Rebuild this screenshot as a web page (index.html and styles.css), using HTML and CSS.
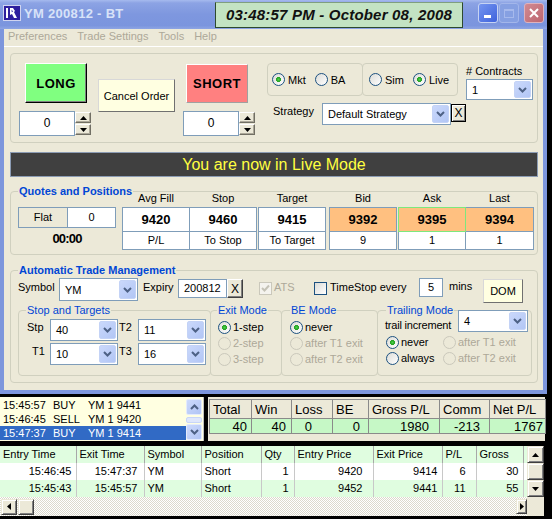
FILE: index.html
```html
<!DOCTYPE html>
<html lang="en">
<head>
    <meta charset="UTF-8">
    <title>YM 200812 - BT</title>
    <link rel="stylesheet" href="styles.css">
</head>
<body>
<div class="screen">
    <div class="window">
        <div class="titlebar">
            <svg class="app-icon" width="18" height="16" viewBox="0 0 18 16">
                <rect x="0.5" y="0.5" width="17" height="15" fill="#2d1f9e" stroke="#d0d4f0"/>
                <path d="M3 3h2v10H3z" fill="#fff"/>
                <path d="M7 3h3l2 3-1 1 3 6h-3l-2-4-2 1z" fill="#fff"/>
                <path d="M8.5 4.5l1.5 2-1.2.8z" fill="#2d1f9e"/>
            </svg>
            <span class="title">YM 200812 - BT</span>
            <div class="clock">03:48:57 PM - October 08, 2008</div>
            <div class="caption-buttons">
                <span class="cap-btn cap-min"><span class="min-bar"></span></span>
                <span class="cap-btn cap-max"><span class="max-box"></span></span>
                <span class="cap-btn cap-close">
                    <svg width="12" height="12" viewBox="0 0 12 12"><path d="M2 2l8 8M10 2l-8 8" stroke="#fff" stroke-width="2"/></svg>
                </span>
            </div>
        </div>

        <div class="frame">
            <div class="menubar">
                <span>Preferences</span>
                <span>Trade Settings</span>
                <span>Tools</span>
                <span>Help</span>
            </div>

            <div class="client">
                <!-- order entry -->
                <div class="order-panel">
                    <div class="side-col">
                        <button class="btn-long">LONG</button>
                        <div class="spinner">
                            <span class="spin-value">0</span>
                            <span class="spin-btns">
                                <span class="spin-btn"><svg width="7" height="4" viewBox="0 0 7 4"><path d="M0 4h7L3.5 0z"/></svg></span>
                                <span class="spin-btn"><svg width="7" height="4" viewBox="0 0 7 4"><path d="M0 0h7L3.5 4z"/></svg></span>
                            </span>
                        </div>
                    </div>
                    <button class="btn-cancel">Cancel Order</button>
                    <div class="side-col short-col">
                        <button class="btn-short">SHORT</button>
                        <div class="spinner">
                            <span class="spin-value">0</span>
                            <span class="spin-btns">
                                <span class="spin-btn"><svg width="7" height="4" viewBox="0 0 7 4"><path d="M0 4h7L3.5 0z"/></svg></span>
                                <span class="spin-btn"><svg width="7" height="4" viewBox="0 0 7 4"><path d="M0 0h7L3.5 4z"/></svg></span>
                            </span>
                        </div>
                    </div>
                    <div class="order-opts">
                        <div class="opts-row">
                            <div class="radio-box box-type">
                                <span class="radio on"><i></i>Mkt</span>
                                <span class="radio"><i></i>BA</span>
                            </div>
                            <div class="radio-box box-mode">
                                <span class="radio"><i></i>Sim</span>
                                <span class="radio on"><i></i>Live</span>
                            </div>
                            <div class="contracts">
                                <span class="lbl"># Contracts</span>
                                <div class="combo combo-contracts">
                                    <span class="combo-text">1</span>
                                    <span class="combo-btn"><svg width="9" height="6" viewBox="0 0 9 6"><path d="M1 1l3.5 3.5L8 1" fill="none" stroke="#4d6185" stroke-width="2"/></svg></span>
                                </div>
                            </div>
                        </div>
                        <div class="strategy-row">
                            <span class="lbl strategy-lbl">Strategy</span>
                            <div class="combo combo-strategy">
                                <span class="combo-text">Default Strategy</span>
                                <span class="combo-btn"><svg width="9" height="6" viewBox="0 0 9 6"><path d="M1 1l3.5 3.5L8 1" fill="none" stroke="#4d6185" stroke-width="2"/></svg></span>
                            </div>
                            <button class="btn-x btn-x-strategy">X</button>
                        </div>
                    </div>
                </div>

                <div class="banner">You are now in Live Mode</div>

                <!-- quotes -->
                <fieldset class="group quotes">
                    <legend>Quotes and Positions</legend>
                    <div class="quotes-row">
                        <div class="pos-col">
                            <div class="pos-box">
                                <span class="pos-flat">Flat</span>
                                <span class="pos-qty">0</span>
                            </div>
                            <div class="pos-time">00:00</div>
                        </div>
                        <div class="qgroup q-avg">
                            <div class="qhead"><span>Avg Fill</span><span>Stop</span></div>
                            <div class="qbox">
                                <span class="qval">9420</span><span class="qval">9460</span>
                                <span class="qsub">P/L</span><span class="qsub">To Stop</span>
                            </div>
                        </div>
                        <div class="qgroup q-target">
                            <div class="qhead"><span>Target</span></div>
                            <div class="qbox">
                                <span class="qval">9415</span>
                                <span class="qsub">To Target</span>
                            </div>
                        </div>
                        <div class="qgroup q-bid">
                            <div class="qhead"><span>Bid</span></div>
                            <div class="qbox">
                                <span class="qval hot">9392</span>
                                <span class="qsub">9</span>
                            </div>
                        </div>
                        <div class="qgroup q-asklast">
                            <div class="qhead"><span>Ask</span><span>Last</span></div>
                            <div class="qbox">
                                <span class="qval hot ask-hot">9395</span><span class="qval hot">9394</span>
                                <span class="qsub">1</span><span class="qsub">1</span>
                            </div>
                        </div>
                    </div>
                </fieldset>

                <!-- automatic trade management -->
                <fieldset class="group atm">
                    <legend>Automatic Trade Management</legend>
                    <div class="atm-top">
                        <span class="lbl lbl-symbol">Symbol</span>
                        <div class="combo combo-symbol">
                            <span class="combo-text">YM</span>
                            <span class="combo-btn"><svg width="9" height="6" viewBox="0 0 9 6"><path d="M1 1l3.5 3.5L8 1" fill="none" stroke="#4d6185" stroke-width="2"/></svg></span>
                        </div>
                        <span class="lbl lbl-expiry">Expiry</span>
                        <span class="textbox tb-expiry">200812</span>
                        <button class="btn-x btn-x-expiry">X</button>
                        <span class="check check-ats">
                            <svg width="9" height="9" viewBox="0 0 9 9"><path d="M1 4l2.5 2.5L8 1.5" fill="none" stroke="#c4c2b6" stroke-width="2"/></svg>
                        </span>
                        <span class="lbl lbl-ats">ATS</span>
                        <span class="check check-time"></span>
                        <span class="lbl lbl-time">TimeStop every</span>
                        <span class="textbox tb-mins">5</span>
                        <span class="lbl lbl-mins">mins</span>
                        <button class="btn-dom">DOM</button>
                    </div>
                    <div class="atm-bottom">
                        <fieldset class="group sub sub-targets">
                            <legend>Stop and Targets</legend>
                            <div class="targets-grid">
                                <span class="lbl t-lbl">Stp</span>
                                <div class="combo">
                                    <span class="combo-text">40</span>
                                    <span class="combo-btn"><svg width="9" height="6" viewBox="0 0 9 6"><path d="M1 1l3.5 3.5L8 1" fill="none" stroke="#4d6185" stroke-width="2"/></svg></span>
                                </div>
                                <span class="lbl t-lbl2">T2</span>
                                <div class="combo">
                                    <span class="combo-text">11</span>
                                    <span class="combo-btn"><svg width="9" height="6" viewBox="0 0 9 6"><path d="M1 1l3.5 3.5L8 1" fill="none" stroke="#4d6185" stroke-width="2"/></svg></span>
                                </div>
                                <span class="lbl t-lbl t1">T1</span>
                                <div class="combo">
                                    <span class="combo-text">10</span>
                                    <span class="combo-btn"><svg width="9" height="6" viewBox="0 0 9 6"><path d="M1 1l3.5 3.5L8 1" fill="none" stroke="#4d6185" stroke-width="2"/></svg></span>
                                </div>
                                <span class="lbl t-lbl2">T3</span>
                                <div class="combo">
                                    <span class="combo-text">16</span>
                                    <span class="combo-btn"><svg width="9" height="6" viewBox="0 0 9 6"><path d="M1 1l3.5 3.5L8 1" fill="none" stroke="#4d6185" stroke-width="2"/></svg></span>
                                </div>
                            </div>
                        </fieldset>

                        <fieldset class="group sub sub-exit">
                            <legend>Exit Mode</legend>
                            <div class="radio-list">
                                <span class="radio on"><i></i>1-step</span>
                                <span class="radio off"><i></i>2-step</span>
                                <span class="radio off"><i></i>3-step</span>
                            </div>
                        </fieldset>

                        <fieldset class="group sub sub-be">
                            <legend>BE Mode</legend>
                            <div class="radio-list">
                                <span class="radio on"><i></i>never</span>
                                <span class="radio off"><i></i>after T1 exit</span>
                                <span class="radio off"><i></i>after T2 exit</span>
                            </div>
                        </fieldset>

                        <fieldset class="group sub sub-trail">
                            <legend>Trailing Mode</legend>
                            <div class="trail-row">
                                <span class="lbl trail-lbl">trail increment</span>
                                <div class="combo combo-trail">
                                    <span class="combo-text">4</span>
                                    <span class="combo-btn"><svg width="9" height="6" viewBox="0 0 9 6"><path d="M1 1l3.5 3.5L8 1" fill="none" stroke="#4d6185" stroke-width="2"/></svg></span>
                                </div>
                            </div>
                            <div class="trail-radios">
                                <span class="radio on"><i></i>never</span>
                                <span class="radio off"><i></i>after T1 exit</span>
                                <span class="radio"><i></i>always</span>
                                <span class="radio off"><i></i>after T2 exit</span>
                            </div>
                        </fieldset>
                    </div>
                </fieldset>
            </div>
        </div>
    </div>

    <div class="lower">
        <div class="lower-top">
            <div class="fills">
                <div class="fills-rows">
                    <div class="fill-row"><span class="f-time">15:45:57</span><span class="f-side">BUY</span><span>YM 1 9441</span></div>
                    <div class="fill-row"><span class="f-time">15:46:45</span><span class="f-side">SELL</span><span>YM 1 9420</span></div>
                    <div class="fill-row selected"><span class="f-time">15:47:37</span><span class="f-side">BUY</span><span>YM 1 9414</span></div>
                </div>
                <div class="xp-vscroll">
                    <span class="xp-sbtn"><svg width="9" height="6" viewBox="0 0 9 6"><path d="M1 5l3.5-3.5L8 5" fill="none" stroke="#4d6185" stroke-width="2"/></svg></span>
                    <span class="xp-thumb"></span>
                    <span class="xp-sbtn"><svg width="9" height="6" viewBox="0 0 9 6"><path d="M1 1l3.5 3.5L8 1" fill="none" stroke="#4d6185" stroke-width="2"/></svg></span>
                </div>
            </div>
            <div class="stats-panel">
                <table class="stats">
                    <colgroup>
                        <col class="s-total"><col class="s-win"><col class="s-loss"><col class="s-be">
                        <col class="s-gross"><col class="s-comm"><col class="s-net">
                    </colgroup>
                    <tr>
                        <th>Total</th><th>Win</th><th>Loss</th><th>BE</th><th>Gross P/L</th><th>Comm</th><th>Net P/L</th>
                    </tr>
                    <tr>
                        <td class="p4">40</td><td class="p5">40</td><td class="p20">0</td><td class="p8">0</td>
                        <td class="p10">1980</td><td class="p9">-213</td><td class="p2">1767</td>
                    </tr>
                </table>
            </div>
        </div>

        <div class="trades">
            <div class="trades-main">
                <table class="trade-grid">
                    <colgroup>
                        <col class="w-entry"><col class="w-exit"><col class="w-sym"><col class="w-pos"><col class="w-qty">
                        <col class="w-eprice"><col class="w-xprice"><col class="w-pl"><col class="w-gross"><col class="w-more">
                    </colgroup>
                    <thead>
                        <tr>
                            <th>Entry Time</th><th>Exit Time</th><th>Symbol</th><th>Position</th><th>Qty</th>
                            <th>Entry Price</th><th>Exit Price</th><th>P/L</th><th>Gross</th><th></th>
                        </tr>
                    </thead>
                    <tbody>
                        <tr>
                            <td class="num">15:46:45</td><td class="num n6">15:47:37</td><td>YM</td><td>Short</td><td class="num n5">1</td>
                            <td class="num n10">9420</td><td class="num">9414</td><td class="num n10">6</td><td class="num">30</td><td></td>
                        </tr>
                        <tr class="alt">
                            <td class="num">15:45:43</td><td class="num n6">15:45:57</td><td>YM</td><td>Short</td><td class="num n5">1</td>
                            <td class="num n10">9452</td><td class="num">9441</td><td class="num n10">11</td><td class="num">55</td><td></td>
                        </tr>
                    </tbody>
                </table>
                <div class="hscroll">
                    <span class="cl-btn"><svg width="4" height="7" viewBox="0 0 4 7"><path d="M4 0v7L0 3.5z"/></svg></span>
                    <span class="cl-btn cl-thumb"></span>
                    <span class="hscroll-track"></span>
                    <span class="cl-btn cl-right"><svg width="4" height="7" viewBox="0 0 4 7"><path d="M0 0v7l4-3.5z"/></svg></span>
                </div>
            </div>
            <div class="vscroll">
                <span class="cl-btn"><svg width="7" height="4" viewBox="0 0 7 4"><path d="M0 4h7L3.5 0z"/></svg></span>
                <span class="cl-btn"></span>
                <span class="cl-btn"><svg width="7" height="4" viewBox="0 0 7 4"><path d="M0 0h7L3.5 4z"/></svg></span>
                <span class="vscroll-corner"></span>
            </div>
        </div>
    </div>
</div>
</body>
</html>
```

FILE: styles.css
```css
* {
    box-sizing: border-box;
}

body {
    margin: 0;
    background: #000;
    font-family: "Liberation Sans", Arial, sans-serif;
    font-size: 11px;
    color: #000;
}

button {
    font-family: inherit;
    font-size: 11px;
    padding: 0;
    color: #000;
}

.screen {
    width: 552px;
    height: 519px;
    overflow: hidden;
}

/* ---------- window chrome ---------- */

.window {
    width: 547px;
}

.titlebar {
    display: flex;
    align-items: flex-start;
    height: 29px;
    padding: 0 3px;
    background: linear-gradient(#a6baee 0, #8ca3e4 3px, #7e97df 50%, #7b95de 88%, #8ea5e3 100%);
}

.app-icon {
    flex: none;
    margin-top: 5px;
}

.title {
    flex: 1;
    margin: 6px 0 0 3px;
    font-size: 13px;
    font-weight: bold;
    line-height: 15px;
    color: #d8e2f8;
    letter-spacing: 0.3px;
}

.clock {
    width: 248px;
    height: 26px;
    margin: 2px 15px 0 0;
    background: #c3e3c3;
    border: 1px solid #2e4a2e;
    border-top-color: #7f9f7f;
    font-size: 15px;
    font-weight: bold;
    font-style: italic;
    line-height: 24px;
    text-align: center;
    letter-spacing: 0.2px;
    color: #111;
}

.caption-buttons {
    display: flex;
    margin-top: 3px;
}

.cap-btn {
    display: flex;
    align-items: center;
    justify-content: center;
    width: 20px;
    height: 20px;
    border-radius: 3px;
    border: 1px solid #c6d3f3;
}

.cap-min {
    align-items: flex-end;
    justify-content: flex-start;
    padding: 0 0 4px 5px;
    background: linear-gradient(135deg, #7495f0, #3e62dc);
}

.min-bar {
    width: 7px;
    height: 3px;
    background: #fff;
}

.cap-max {
    margin-left: 1px;
    background: #86a0e2;
    border-color: #a3b6ea;
}

.max-box {
    width: 10px;
    height: 9px;
    border: 1px solid #a6b9ec;
    border-top-width: 2px;
}

.cap-close {
    margin-left: 5px;
    background: linear-gradient(135deg, #d18a92, #bd6670);
    border-color: #deb2bd;
}

.frame {
    border: 4px solid #7d96dc;
    border-top: 0;
}

.menubar {
    display: flex;
    gap: 10px;
    height: 18px;
    padding-left: 4px;
    background: #ece9d8;
    border-bottom: 1px solid #fff;
    color: #aca899;
    line-height: 15px;
}

.client {
    height: 343px;
    padding-top: 6px;
    background: #ece9d8;
    overflow: hidden;
}

/* ---------- common controls ---------- */

.lbl {
    line-height: 13px;
    white-space: nowrap;
}

.group {
    margin: 0;
    padding: 0;
    min-width: 0;
    border: 1px solid #d0d0bf;
    border-radius: 4px;
}

.group > legend {
    padding: 0 1px;
    color: #0046d5;
    line-height: 13px;
}

.combo {
    display: flex;
    align-items: center;
    height: 22px;
    background: #fff;
    border: 1px solid #7f9db9;
}

.combo-text {
    flex: 1;
    padding-left: 5px;
    white-space: nowrap;
}

.combo-btn {
    display: flex;
    align-items: center;
    justify-content: center;
    width: 17px;
    height: calc(100% - 2px);
    margin-right: 1px;
    border: 1px solid #c4d3f6;
    border-radius: 2px;
    background: linear-gradient(135deg, #cad8fb, #b2c6f5);
}

.textbox {
    display: block;
    height: 19px;
    background: #fff;
    border: 1px solid #7f9db9;
    line-height: 17px;
}

.radio {
    display: flex;
    align-items: center;
    height: 16px;
    white-space: nowrap;
}

.radio i {
    flex: none;
    width: 13px;
    height: 13px;
    margin-right: 2px;
    border: 1px solid #1c5180;
    border-radius: 50%;
    background: linear-gradient(135deg, #dcdcd7, #fff);
}

.radio.on i {
    background: radial-gradient(circle, #4fd14b 0, #21a121 2.2px, transparent 2.8px),
                linear-gradient(135deg, #dcdcd7, #fff);
}

.radio.off {
    color: #aca899;
}

.radio.off i {
    border-color: #cac8bb;
    background: none;
}

.check {
    display: flex;
    align-items: center;
    justify-content: center;
    width: 13px;
    height: 13px;
    border: 1px solid #1c5180;
    background: linear-gradient(135deg, #dcdcd7, #fff);
}

.check-ats {
    border-color: #cac8bb;
    background: #f4f3ee;
}

.btn-x {
    height: 19px;
    font-size: 12px;
    background: #ece9d8;
    border: 1px solid;
    border-color: #fff #404040 #404040 #fff;
    box-shadow: inset -1px -1px #808080;
}

/* ---------- order panel ---------- */

.order-panel {
    display: flex;
    align-items: flex-start;
    width: 528px;
    height: 90px;
    margin-left: 6px;
    padding-top: 9px;
    border: 1px solid #d0d0bf;
    border-radius: 4px;
}

.side-col {
    width: 73px;
    margin-left: 8px;
}

.short-col {
    margin-left: 8px;
}

.btn-long,
.btn-short {
    display: block;
    width: 62px;
    font-size: 13px;
    font-weight: bold;
    letter-spacing: 0.5px;
    border: 1px solid;
}

.btn-long {
    height: 40px;
    margin-left: 6px;
    background: #80ff80;
    border-color: #fff #000 #000 #fff;
    box-shadow: inset -1px -1px #808080;
}

.btn-short {
    height: 39px;
    margin: 1px 0 0 3px;
    background: #ff8080;
    border-color: #fff #a0a0a0 #a0a0a0 #fff;
}

.btn-short + .spinner {
    margin-top: 8px;
}

.spinner {
    display: flex;
    height: 25px;
    margin-top: 8px;
}

.spin-value {
    width: 56px;
    background: #fff;
    border: 1px solid #7f9db9;
    font-size: 12px;
    line-height: 23px;
    text-align: center;
}

.spin-btns {
    display: flex;
    flex-direction: column;
    gap: 1px;
    padding-top: 1px;
}

.spin-btn {
    display: flex;
    align-items: center;
    justify-content: center;
    width: 16px;
    height: 11px;
    background: #ece9d8;
    border: 1px solid;
    border-color: #fff #716f64 #716f64 #fff;
    box-shadow: inset -1px -1px #aca899;
}

.btn-cancel {
    width: 77px;
    height: 33px;
    margin: 16px 0 0 6px;
    background: #ffffe1;
    border: 1px solid;
    border-color: #d8d8d8 #707070 #707070 #d8d8d8;
}

.order-opts {
    margin-left: 11px;
}

.opts-row {
    display: flex;
    align-items: flex-start;
}

.radio-box {
    display: flex;
    align-items: center;
    gap: 9px;
    width: 96px;
    height: 33px;
    border: 1px solid #d0d0bf;
    border-radius: 4px;
}

.radio-box .radio i {
    margin-right: 3px;
}

.box-type {
    padding-left: 4px;
}

.box-mode {
    margin-left: -1px;
    padding-left: 6px;
}

.contracts {
    width: 67px;
    margin: 2px 0 0 8px;
}

.combo-contracts {
    height: 21px;
    margin-top: 1px;
}

.strategy-row {
    display: flex;
    align-items: flex-start;
    margin-top: 3px;
}

.strategy-lbl {
    width: 49px;
    margin: 2px 0 0 6px;
}

.combo-strategy {
    width: 129px;
}

.btn-x-strategy {
    width: 15px;
    height: 18px;
    margin-top: 1px;
    border: 1px solid #000;
    box-shadow: inset 1px 1px #fff, inset -1px -1px #808080;
}

/* ---------- live banner ---------- */

.banner {
    width: 528px;
    height: 25px;
    margin: 9px 0 0 6px;
    background: #404040;
    border: 1px solid #8c9cb4;
    color: #ffff40;
    font-size: 16px;
    line-height: 23px;
    text-align: center;
}

/* ---------- quotes ---------- */

.quotes {
    width: 528px;
    margin: 8px 0 0 6px;
    padding-bottom: 4px;
}

.quotes > legend,
.atm > legend {
    margin-left: 7px;
    font-weight: bold;
}

.quotes-row {
    display: flex;
    align-items: flex-start;
    margin-top: -6px;
}

.pos-col {
    width: 98px;
    margin-left: 7px;
    padding-top: 15px;
}

.pos-box {
    display: grid;
    grid-template-columns: 48px 47px;
    gap: 1px;
    height: 21px;
    padding: 1px;
    background: #7f9db9;
}

.pos-box span {
    line-height: 19px;
    text-align: center;
}

.pos-flat {
    background: #ece9d8;
}

.pos-qty {
    background: #fff;
}

.pos-time {
    margin-top: 3px;
    font-size: 13px;
    font-weight: bold;
    line-height: 15px;
    text-align: center;
    letter-spacing: -0.8px;
}

.qgroup {
    margin-left: 1px;
}

.q-avg {
    margin-left: 6px;
}

.q-bid {
    margin-left: 3px;
}

.qhead,
.qbox {
    display: grid;
    column-gap: 1px;
    padding: 0 1px;
}

.qhead {
    height: 13px;
    margin-bottom: 2px;
    line-height: 13px;
    text-align: center;
}

.qbox {
    grid-template-rows: 23px 17px;
    row-gap: 1px;
    padding: 1px;
    background: #7f9db9;
}

.q-avg .qhead,
.q-avg .qbox {
    grid-template-columns: 66px 66px;
}

.q-target .qhead,
.q-target .qbox,
.q-bid .qhead,
.q-bid .qbox {
    grid-template-columns: 66px;
}

.q-asklast .qhead,
.q-asklast .qbox {
    grid-template-columns: 66px 67px;
}

.qval {
    background: #fff;
    font-size: 13px;
    font-weight: bold;
    line-height: 23px;
    text-align: center;
}

.qsub {
    background: #fff;
    line-height: 17px;
    text-align: center;
}

.hot {
    background: #ffc080;
}

.ask-hot {
    outline: 1px solid #7de87d;
}

/* ---------- automatic trade management ---------- */

.atm {
    width: 528px;
    margin: 9px 0 0 6px;
    padding-bottom: 6px;
}

.atm-top {
    display: flex;
    align-items: flex-start;
    height: 25px;
    margin-top: 1px;
}

.lbl-symbol {
    width: 41px;
    margin: 3px 0 0 7px;
}

.combo-symbol {
    width: 79px;
    height: 23px;
}

.lbl-expiry {
    width: 35px;
    margin: 3px 0 0 5px;
}

.tb-expiry {
    width: 49px;
    margin-top: 1px;
    padding-left: 5px;
}

.btn-x-expiry {
    width: 16px;
    margin-top: 1px;
}

.check-ats {
    margin: 4px 0 0 16px;
}

.lbl-ats {
    width: 40px;
    margin: 3px 0 0 2px;
    color: #aca899;
}

.check-time {
    margin-top: 4px;
}

.lbl-time {
    width: 89px;
    margin: 3px 0 0 3px;
}

.tb-mins {
    width: 24px;
    text-align: center;
}

.lbl-mins {
    width: 34px;
    margin: 2px 0 0 6px;
}

.btn-dom {
    width: 40px;
    height: 24px;
    margin-top: 1px;
    background: #ffffe1;
    border: 1px solid;
    border-color: #d8d8d8 #707070 #707070 #d8d8d8;
}

.atm-bottom {
    display: flex;
    align-items: flex-start;
    height: 72px;
    margin-top: 1px;
}

.sub {
    height: 72px;
}

.sub-targets {
    width: 193px;
    margin-left: 7px;
}

.sub-targets > legend {
    margin-left: 7px;
}

.targets-grid {
    display: grid;
    grid-template-columns: 31px 68px 20px 68px;
    grid-template-rows: 22px 22px;
    row-gap: 2px;
    margin-top: 2px;
}

.t-lbl {
    padding: 2px 0 0 8px;
}

.t-lbl.t1 {
    padding-left: 13px;
}

.t-lbl2 {
    padding: 2px 0 0 1px;
}

.sub-exit {
    width: 72px;
    margin-left: -1px;
}

.sub-exit > legend {
    margin-left: 6px;
}

.radio-list {
    margin-top: 2px;
}

.sub-exit .radio-list {
    padding-left: 7px;
}

.sub-be {
    width: 97px;
    margin-left: -1px;
}

.sub-be > legend {
    margin-left: 8px;
}

.sub-be .radio-list {
    padding-left: 8px;
}

.sub-trail {
    width: 155px;
    margin-left: -1px;
}

.sub-trail > legend {
    margin-left: 8px;
}

.trail-row {
    display: flex;
    align-items: flex-start;
    margin-top: -7px;
}

.trail-lbl {
    width: 80px;
    margin-top: 9px;
    padding-left: 7px;
    letter-spacing: -0.2px;
}

.combo-trail {
    width: 70px;
}

.trail-radios {
    display: grid;
    grid-template-columns: 57px auto;
    margin-top: 2px;
    padding-left: 8px;
}

/* ---------- lower panels ---------- */

.lower {
    margin-top: 3px;
}

.lower-top {
    display: flex;
    height: 44px;
}

.fills {
    display: flex;
    width: 204px;
    background: #ffffe1;
    border-right: 1px solid #c0c0c0;
}

.fills-rows {
    width: 186px;
    padding-top: 1px;
}

.fill-row {
    display: flex;
    height: 14px;
    padding-left: 3px;
    line-height: 14px;
    white-space: nowrap;
}

.f-time {
    width: 50px;
}

.f-side {
    width: 35px;
}

.fill-row.selected {
    background: #316ac5;
    color: #fff;
}

.xp-vscroll {
    display: flex;
    flex-direction: column;
    width: 16px;
    padding-top: 2px;
}

.xp-sbtn {
    display: flex;
    align-items: center;
    justify-content: center;
    height: 16px;
    border: 1px solid #e4ebfc;
    border-radius: 2px;
    background: linear-gradient(135deg, #cddafc, #b0c4f4);
}

.xp-thumb {
    height: 6px;
    margin: 2px 0 1px;
    border: 1px solid #c8d6f8;
    border-radius: 2px;
    background: #dfe7fc;
}

.stats-panel {
    width: 337px;
    margin-left: 4px;
    padding: 2px 0 0 1px;
    background: #ece9d8;
}

.stats {
    width: 336px;
    table-layout: fixed;
    border-collapse: collapse;
    font-size: 13px;
}

.s-total { width: 42px; }
.s-win { width: 40px; }
.s-loss { width: 41px; }
.s-be { width: 36px; }
.s-gross { width: 71px; }
.s-comm { width: 50px; }
.s-net { width: 56px; }

.stats th {
    height: 19px;
    padding: 0 0 0 3px;
    background: #ece9d8;
    border: 1px solid #8a8a8a;
    font-weight: normal;
    text-align: left;
    white-space: nowrap;
    overflow: hidden;
}

.stats td {
    height: 15px;
    padding: 0;
    background: #c6f8c6;
    border: 1px solid #8a8a8a;
    border-top: 0;
    line-height: 13px;
    text-align: right;
}

.p2 { padding-right: 2px !important; }
.p4 { padding-right: 4px !important; }
.p5 { padding-right: 5px !important; }
.p8 { padding-right: 8px !important; }
.p9 { padding-right: 9px !important; }
.p10 { padding-right: 10px !important; }
.p20 { padding-right: 20px !important; }

.trades {
    display: flex;
    width: 544px;
    height: 70px;
    margin-top: 5px;
}

.trades-main {
    width: 527px;
}

.trade-grid {
    width: 527px;
    table-layout: fixed;
    border-collapse: collapse;
}

.w-entry { width: 76px; }
.w-exit { width: 68px; }
.w-sym { width: 57px; }
.w-pos { width: 60px; }
.w-qty { width: 33px; }
.w-eprice { width: 79px; }
.w-xprice { width: 69px; }
.w-pl { width: 34px; }
.w-gross { width: 47px; }
.w-more { width: 4px; }

.trade-grid th,
.trade-grid td {
    height: 17px;
    padding: 0 0 0 3px;
    border-right: 1px solid #c8c8c8;
    line-height: 15px;
    white-space: nowrap;
    overflow: hidden;
}

.trade-grid th {
    background: #e0fde0;
    border-right-color: #a8a8a8;
    font-weight: normal;
    text-align: left;
}

.trade-grid td {
    background: #fff;
}

.trade-grid .alt td {
    background: #e0fde0;
}

.trade-grid .num {
    padding: 0 4px 0 0;
    text-align: right;
}

.trade-grid .n5 { padding-right: 5px; }
.trade-grid .n6 { padding-right: 6px; }
.trade-grid .n10 { padding-right: 10px; }

.hscroll {
    display: flex;
    align-items: center;
    height: 19px;
    padding-left: 1px;
    background: repeating-conic-gradient(#dcd9cc 0 25%, #fff 0 50%) 0 0 / 2px 2px;
}

.cl-btn {
    display: flex;
    align-items: center;
    justify-content: center;
    flex: none;
    width: 16px;
    height: 16px;
    background: #ece9d8;
    border: 1px solid;
    border-color: #ece9d8 #404040 #404040 #ece9d8;
    box-shadow: inset 1px 1px #fff, inset -1px -1px #808080;
}

.cl-thumb {
    margin-left: 1px;
}

.hscroll-track {
    flex: 1;
}

.cl-right {
    width: 11px;
    height: 15px;
}

.vscroll {
    display: flex;
    flex-direction: column;
    width: 17px;
}

.vscroll .cl-btn {
    width: 17px;
    height: 17px;
}

.vscroll-corner {
    flex: 1;
    background: #ece9d8;
}
```
